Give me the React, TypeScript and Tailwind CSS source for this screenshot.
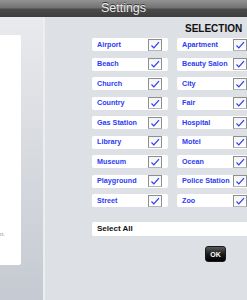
import { type FC } from "react";

const places = [
  ["Airport", "Apartment"],
  ["Beach", "Beauty Salon"],
  ["Church", "City"],
  ["Country", "Fair"],
  ["Gas Station", "Hospital"],
  ["Library", "Motel"],
  ["Museum", "Ocean"],
  ["Playground", "Police Station"],
  ["Street", "Zoo"],
];

const CheckBox: FC = () => (
  <div className="w-[14px] h-[12px] mr-[6px] shrink-0 border border-[#8e8e8e] border-b-[#b5b5b5] bg-[linear-gradient(#f4f4f4,#ffffff)] flex items-center justify-center">
    <svg width="12" height="10" viewBox="0 0 12 10">
      <path d="M2.5 5.5 L4.8 7.8 L10 2.2" fill="none" stroke="#2c3cf0" strokeWidth="1.2" />
    </svg>
  </div>
);

const Cell: FC<{ label: string }> = ({ label }) => (
  <div className="flex items-center bg-white rounded-[2px] pl-[5px]">
    <span className="flex-1 whitespace-nowrap text-[7.2px] font-bold leading-none text-[#2b3cf5]">
      {label}
    </span>
    <CheckBox />
  </div>
);

export default function App() {
  return (
    <div className="w-[247px] h-[300px] overflow-hidden flex flex-col font-['Liberation_Sans',Arial,sans-serif]">
      {/* title bar */}
      <div className="h-[17px] shrink-0 flex items-center justify-center bg-[linear-gradient(#939393,#717171_48%,#4b4b4b_52%,#3d3d3d)]">
        <span className="text-[12.5px] leading-none text-[#ececec] [text-shadow:0_-1px_0_#333]">
          Settings
        </span>
      </div>

      <div className="flex flex-1">
        {/* left pane */}
        <div className="w-[43px] shrink-0 pt-[18px] bg-[linear-gradient(#e9eaed,#c5c9d1)]">
          <div className="w-[21px] h-[230px] bg-white rounded-r-[2px] flex flex-col justify-end pb-[28px]">
            <span className="text-[6px] leading-none text-[#8a8a8a]">n.</span>
          </div>
        </div>
        <div className="w-[2px] shrink-0 bg-[#eceef1]" />

        {/* right pane */}
        <div className="flex-1 bg-[#dde0e5] pl-[47px] pt-[7px]">
          <div className="pl-[93px] text-[10px] font-bold leading-[10px] text-[#111] whitespace-nowrap">
            SELECTION
          </div>
          <div className="mt-[4px] grid grid-cols-[76px_76px] auto-rows-[13px] gap-x-[9px] gap-y-[6.5px]">
            {places.map(([a, b]) => [
              <Cell key={a} label={a} />,
              <Cell key={b} label={b} />,
            ])}
          </div>
          <div className="mt-[15px] w-[161px] h-[14px] bg-white rounded-[2px] pl-[5px] flex items-center">
            <span className="text-[8px] font-bold leading-none text-[#111]">Select All</span>
          </div>
          <div className="mt-[10px] ml-[113px] w-[21px] h-[16px] rounded-[3px] border border-[#1a1a1a] bg-[linear-gradient(#5a5a5a,#1c1c1c_50%,#000)] flex items-center justify-center">
            <span className="text-[7px] font-bold leading-none text-white">OK</span>
          </div>
        </div>
      </div>
    </div>
  );
}
